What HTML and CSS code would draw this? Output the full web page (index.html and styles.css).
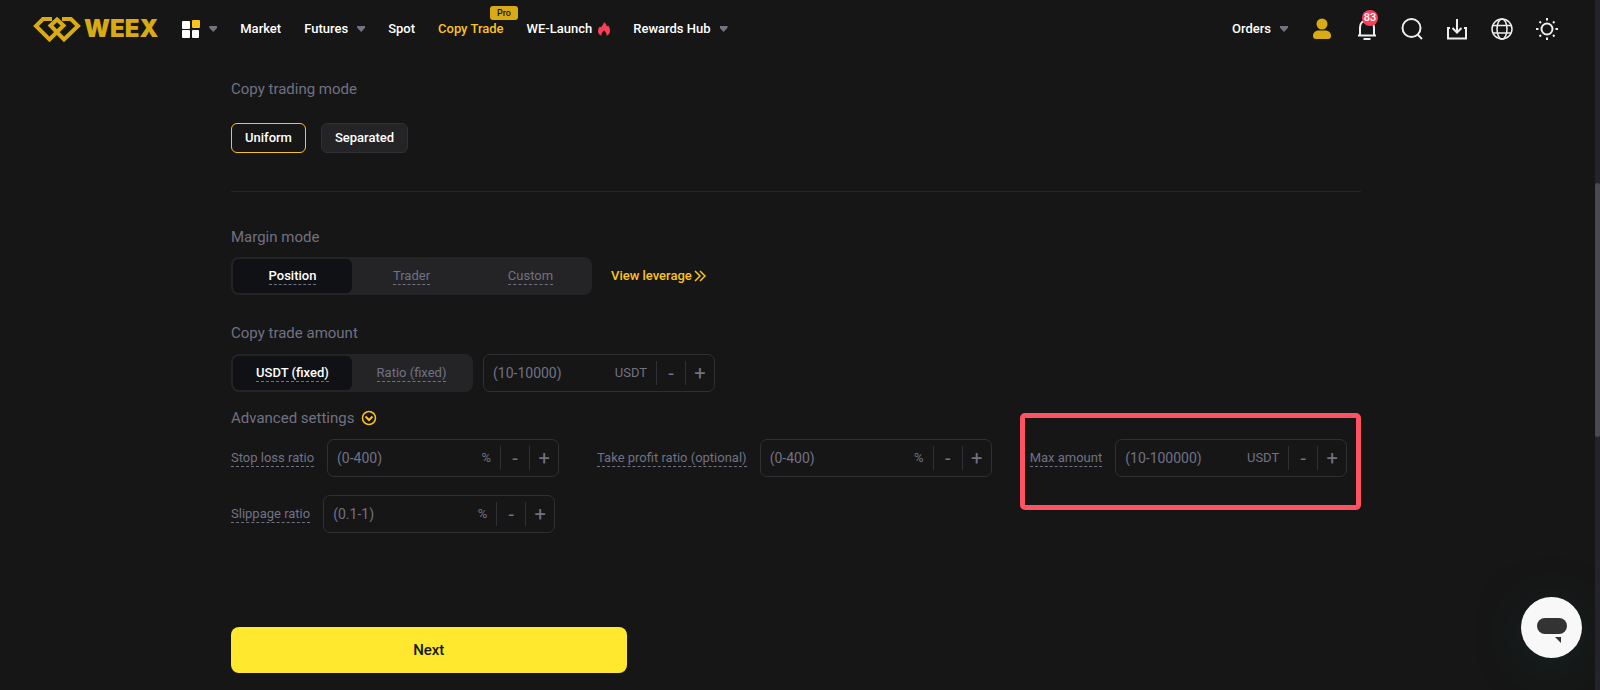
FILE: index.html
```html
<!DOCTYPE html>
<html lang="en">
	<head>
		<meta charset="utf-8">
		<title>WEEX Copy Trade</title>
		<link rel="stylesheet" href="styles.css">
	</head>
	<body>
		<header class="header">
			<a href="#" class="logo">
				<svg width="48" height="28" viewBox="0 0 48 28" fill="none" stroke="#d8ab15" stroke-width="4">
					<path d="M19 4H10L3 11 16.500 24.500 30.500 10.500 24 4.500 17.500 10.500 31 24.500 45 11 38 4H29"/>
				</svg>
				<span>WEEX</span>
			</a>
			<nav class="nav">
				<button class="apps" aria-label="Products">
					<svg width="18" height="18" viewBox="0 0 18 18" fill="#fff">
						<rect x="0" y="1" width="8" height="8" rx="1"/>
						<rect x="10" y="0" width="8" height="8" rx="1" fill="#fcc41a"/>
						<rect x="0" y="10" width="8" height="8" rx="1"/>
						<rect x="10" y="10" width="7" height="8" rx="1"/>
					</svg>
					<i class="arrow"></i>
				</button>
				<a href="#">Market</a>
				<a href="#">Futures<i class="arrow"></i></a>
				<a href="#">Spot</a>
				<a href="#" class="current">Copy Trade<span class="pro">Pro</span></a>
				<a href="#" class="launch">WE-Launch
					<svg width="12" height="14" viewBox="0 0 12 14"><path fill="#fb3f57" d="M6 0c2 1.500 2.600 3 3 4.500l1-1C11.500 5 12 7 12 9c0 2.500-1.500 4-3.500 4.700.4-2-.5-3.700-2.500-5.200-2 1.500-2.900 3.200-2.500 5.200C1.500 13 0 11.500 0 9c0-2 .8-3.500 2-4.600l1 1C4 4 5.500 2.500 6 0z"/></svg>
				</a>
				<a href="#">Rewards Hub<i class="arrow"></i></a>
			</nav>
			<div class="tools">
				<a href="#">Orders<i class="arrow"></i></a>
				<button aria-label="Account">
					<svg width="22" height="22" viewBox="0 0 22 22" fill="#d8ab15"><circle cx="11" cy="6" r="5.500"/><path d="M2 18c0-4 3-5.500 6-5.500h6c3 0 6 1.500 6 5.500 0 2-1 3-3 3H5c-2 0-3-1-3-3z"/></svg>
				</button>
				<button class="bell" aria-label="Notifications">
					<svg width="22" height="22" viewBox="0 0 22 22" fill="none" stroke="#eee" stroke-width="2"><path d="M2 17.500h18M4 17.500V9.500C4 5 7 2.500 11 2.500s7 2.500 7 7v8M7.500 21h7"/></svg>
					<span class="count">83</span>
				</button>
				<button aria-label="Search">
					<svg width="22" height="22" viewBox="0 0 22 22" fill="none" stroke="#eee" stroke-width="2"><circle cx="10.500" cy="10" r="9"/><path d="M16.500 16.500l4.500 4.500"/></svg>
				</button>
				<button aria-label="Download">
					<svg width="22" height="22" viewBox="0 0 22 22" fill="none" stroke="#eee" stroke-width="2"><path d="M4 10H2v10.500h18V10h-2M11 1v13M6.500 10l4.500 4.500 4.500-4.500"/></svg>
				</button>
				<button aria-label="Language">
					<svg width="22" height="22" viewBox="0 0 22 22" fill="none" stroke="#eee" stroke-width="1.500"><circle cx="11" cy="11" r="10"/><ellipse cx="11" cy="11" rx="5" ry="10"/><path d="M2 7.500h18M2 15h18"/></svg>
				</button>
				<button aria-label="Theme">
					<svg width="22" height="22" viewBox="0 0 22 22" fill="none" stroke="#eee" stroke-width="2"><circle cx="11" cy="11" r="5.500"/><path d="M11 0v2.500M11 19.500V22M0 11h2.500M19.500 11H22M3.500 3.500l1.500 1.500M17 17l1.500 1.500M3.500 18.500L5 17M17 5l1.500-1.500"/></svg>
				</button>
			</div>
		</header>

		<main class="main">
			<form class="form">
				<h2>Copy trading mode</h2>
				<div class="modes">
					<button type="button" class="on">Uniform</button>
					<button type="button">Separated</button>
				</div>

				<h2>Margin mode</h2>
				<div class="line margin">
					<div class="tabs">
						<button type="button" class="on"><span>Position</span></button>
						<button type="button"><span>Trader</span></button>
						<button type="button"><span>Custom</span></button>
					</div>
					<a href="#" class="leverage">View leverage
						<svg width="12" height="12" viewBox="0 0 12 12" fill="none" stroke="#fcc41a" stroke-width="1.500"><path d="M1 1l5 5-5 5M6 1l5 5-5 5"/></svg>
					</a>
				</div>

				<h2><label for="amount">Copy trade amount</label></h2>
				<div class="line amount">
					<div class="tabs">
						<button type="button" class="on"><span>USDT (fixed)</span></button>
						<button type="button"><span>Ratio (fixed)</span></button>
					</div>
					<div class="stepper">
						<input type="text" id="amount" placeholder="(10-10000)">
						<span>USDT</span>
						<button type="button" aria-label="Decrease">-</button>
						<button type="button" aria-label="Increase">+</button>
					</div>
				</div>

				<h2 class="advanced">Advanced settings
					<button type="button" aria-label="Toggle advanced settings">
						<svg width="16" height="16" viewBox="0 0 16 16" fill="none" stroke="#fcc41a"><circle cx="8" cy="8" r="6.500" stroke-width="1.500"/><path d="M4.500 6.500L8 10l3.500-3.500" stroke-width="2"/></svg>
					</button>
				</h2>
				<div class="fields">
					<div class="field">
						<label for="stop">Stop loss ratio</label>
						<div class="stepper">
							<input type="text" id="stop" placeholder="(0-400)">
							<span>%</span>
							<button type="button" aria-label="Decrease">-</button>
							<button type="button" aria-label="Increase">+</button>
						</div>
					</div>
					<div class="field">
						<label for="profit">Take profit ratio (optional)</label>
						<div class="stepper">
							<input type="text" id="profit" placeholder="(0-400)">
							<span>%</span>
							<button type="button" aria-label="Decrease">-</button>
							<button type="button" aria-label="Increase">+</button>
						</div>
					</div>
					<div class="field marked">
						<label for="max">Max amount</label>
						<div class="stepper">
							<input type="text" id="max" placeholder="(10-100000)">
							<span>USDT</span>
							<button type="button" aria-label="Decrease">-</button>
							<button type="button" aria-label="Increase">+</button>
						</div>
					</div>
					<div class="field">
						<label for="slip">Slippage ratio</label>
						<div class="stepper">
							<input type="text" id="slip" placeholder="(0.1-1)">
							<span>%</span>
							<button type="button" aria-label="Decrease">-</button>
							<button type="button" aria-label="Increase">+</button>
						</div>
					</div>
				</div>
				<button type="submit" class="next">Next</button>
			</form>
		</main>

		<button class="chat" aria-label="Chat">
			<svg width="30" height="26" viewBox="0 0 30 26" fill="#333"><rect width="30" height="16" rx="8"/><path d="M18 19h6v6z"/></svg>
		</button>
		<div class="scrollbar"><div class="thumb"></div></div>
	</body>
</html>
```

FILE: styles.css
```css
*,
*::before {
	margin: 0;
	padding: 0;
	box-sizing: border-box;
}

body {
	background-color: #161616;
	color: #fff;
	font: 13px/20px Roboto, "Liberation Sans", sans-serif;
}

a {
	color: inherit;
	text-decoration: none;
}

button {
	border: none;
	background: none;
	color: inherit;
	font: inherit;
	cursor: pointer;
}

svg {
	display: block;
}

/* header */
.header {
	display: flex;
	align-items: center;
	height: 58px;
	padding: 0 42px 0 33px;
	font-weight: 500;
}

.logo {
	display: flex;
	align-items: center;
	gap: 3px;
	color: #d8ab15;
	font: 900 24px/28px Inter, sans-serif;
}

.nav,
.nav a,
.nav button,
.tools,
.tools a {
	display: flex;
	align-items: center;
}

.nav {
	gap: 23px;
	margin-left: 24px;
}

.arrow {
	width: 8px;
	height: 6px;
	margin-left: 9px;
	background-color: #73737f;
	clip-path: polygon(0 0, 100% 0, 100% 30%, 50% 100%, 0 30%);
}

.current {
	position: relative;
	color: #fcc41a;
}

.pro {
	position: absolute;
	left: 52px;
	top: -13px;
	width: 28px;
	border-radius: 3px;
	background-color: #d8ab15;
	color: #161616;
	font-size: 9px;
	line-height: 14px;
	text-align: center;
}

.launch {
	gap: 6px;
}

.tools {
	gap: 23px;
	margin-left: auto;
}

.bell {
	position: relative;
}

.count {
	position: absolute;
	left: 6px;
	top: -8px;
	width: 16px;
	border-radius: 8px;
	background-color: #fb3f57;
	font-size: 11px;
	line-height: 16px;
	text-align: center;
}

/* settings form */
.main {
	padding: 0 16px 0 8px;
}

.form {
	max-width: 1130px;
	margin: 0 auto;
	padding: 20px 0 16px;
}

h2 {
	color: #717184;
	font-size: 15px;
	font-weight: 400;
	line-height: 22px;
}

.modes {
	display: flex;
	gap: 15px;
	margin: 23px 0 34px;
	padding-bottom: 38px;
	border-bottom: 1px solid #242427;
}

.modes button {
	height: 30px;
	padding: 0 13px;
	border: 1px solid #303034;
	border-radius: 6px;
	background-color: #242427;
	font-weight: 500;
}

.modes .on {
	border-color: #fcc41a;
	background: none;
}

.line {
	display: flex;
	align-items: center;
}

.margin {
	gap: 19px;
	margin: 9px 0 27px;
}

.amount {
	gap: 10px;
	margin: 10px 0 15px;
}

.tabs {
	display: flex;
	padding: 2px;
	border-radius: 8px;
	background-color: #242427;
}

.tabs button {
	width: 119px;
	height: 34px;
	border-radius: 6px;
	color: #717184;
}

.tabs .on {
	background-color: #101114;
	color: #fff;
	font-weight: 500;
}

.tabs span {
	display: inline-block;
	border-bottom: 1px dashed #717184;
	line-height: 17px;
}

.leverage {
	display: flex;
	align-items: center;
	gap: 2px;
	color: #fcc41a;
	font-weight: 500;
}

.stepper {
	display: flex;
	align-items: center;
	width: 232px;
	height: 38px;
	border: 1px solid #303034;
	border-radius: 7px;
	color: #717184;
}

.stepper input {
	flex: 1;
	min-width: 0;
	padding-left: 9px;
	border: none;
	outline: none;
	background: none;
	color: #fff;
	font: inherit;
	font-size: 14px;
}

.stepper input::placeholder {
	color: #717184;
}

.stepper span {
	padding-right: 9px;
}

.stepper button {
	width: 29px;
	height: 24px;
	border-left: 1px solid #303034;
	font-size: 20px;
}

.advanced {
	display: flex;
	align-items: center;
	gap: 7px;
}

.fields {
	display: flex;
	flex-wrap: wrap;
	gap: 18px 38px;
	margin: 10px 0 94px;
}

.field {
	display: flex;
	align-items: center;
	gap: 13px;
	color: #717184;
}

.field label {
	border-bottom: 1px dashed #717184;
	line-height: 17px;
}

/* red frame around the field */
.marked {
	position: relative;
}

.marked::before {
	content: "";
	position: absolute;
	left: -10px;
	right: -14px;
	top: -26px;
	height: 97px;
	border: 5px solid #ff5263;
	border-radius: 5px;
	pointer-events: none;
}

.next {
	display: block;
	width: 35%;
	min-width: 240px;
	height: 46px;
	border-radius: 8px;
	background-color: #ffe82e;
	color: #161616;
	font-size: 15px;
	font-weight: 500;
}

/* things floating over the page */
.chat {
	position: fixed;
	right: 18px;
	bottom: 32px;
	display: flex;
	justify-content: center;
	width: 61px;
	height: 61px;
	padding-top: 21px;
	border-radius: 50%;
	background-color: #f8f8f8;
	box-shadow: 0 6px 40px rgba(24, 48, 52, .5);
}

.scrollbar {
	position: fixed;
	top: 0;
	right: 0;
	bottom: 0;
	width: 5px;
	padding-top: 183px;
	background-color: #242329;
}

.thumb {
	height: 254px;
	border-radius: 3px;
	background-color: #4a494f;
}
```
